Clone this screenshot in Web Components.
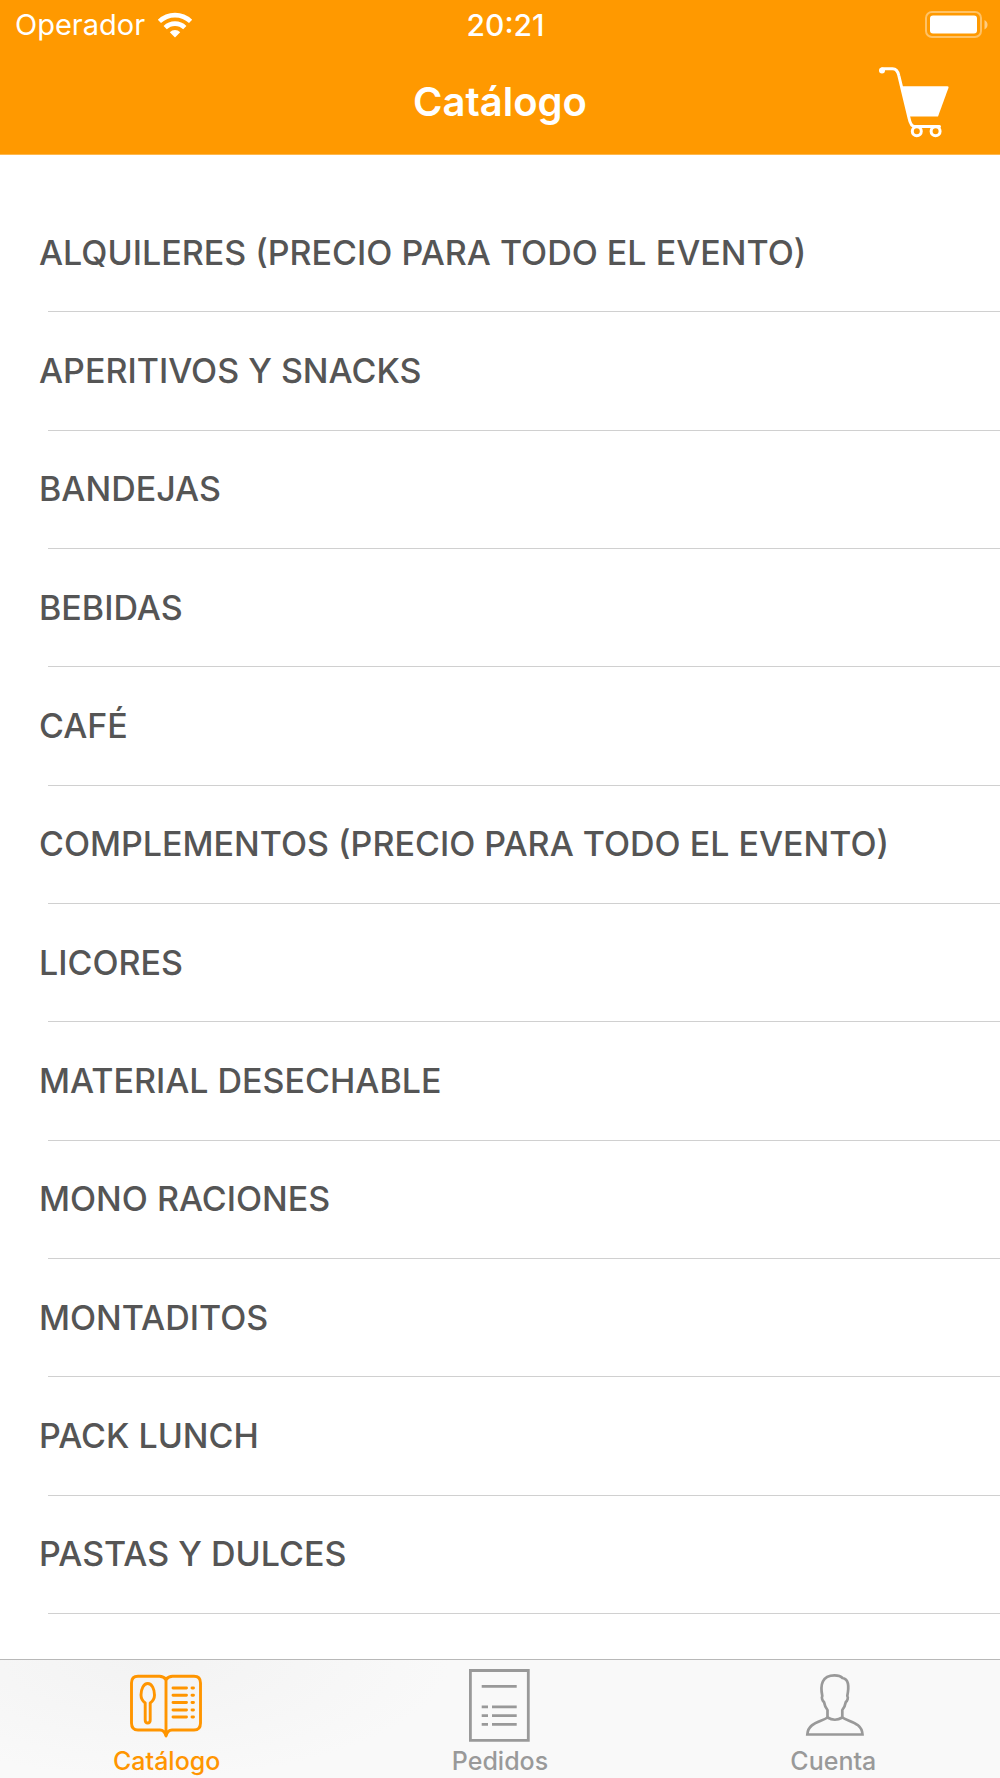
<!DOCTYPE html>
<html lang="es">
<head>
<meta charset="utf-8">
<meta name="viewport" content="width=device-width, initial-scale=1">
<title>Catálogo</title>
<style>
    body {
        margin: 0;
        background: #fff;
        font-family: Inter, "Liberation Sans", sans-serif;
    }
</style>
</head>
<body>
<catalog-app>
    <status-bar slot="top" carrier="Operador" time="20:21"></status-bar>
    <nav-bar slot="top">Catálogo</nav-bar>

    <category-row>ALQUILERES (PRECIO PARA TODO EL EVENTO)</category-row>
    <category-row>APERITIVOS Y SNACKS</category-row>
    <category-row>BANDEJAS</category-row>
    <category-row>BEBIDAS</category-row>
    <category-row>CAFÉ</category-row>
    <category-row>COMPLEMENTOS (PRECIO PARA TODO EL EVENTO)</category-row>
    <category-row>LICORES</category-row>
    <category-row>MATERIAL DESECHABLE</category-row>
    <category-row>MONO RACIONES</category-row>
    <category-row>MONTADITOS</category-row>
    <category-row>PACK LUNCH</category-row>
    <category-row>PASTAS Y DULCES</category-row>

    <tab-item slot="tabs" icon="menu" active>Catálogo</tab-item>
    <tab-item slot="tabs" icon="orders">Pedidos</tab-item>
    <tab-item slot="tabs" icon="account">Cuenta</tab-item>
</catalog-app>

<script>
class CatalogApp extends HTMLElement {
    connectedCallback() {
        this.attachShadow({ mode: 'open' });
        this.shadowRoot.innerHTML = `
            <style>
                :host {
                    display: flex;
                    flex-direction: column;
                    min-height: 100vh;
                }

                header {
                    background: #ff9900;
                    color: #fff;
                    border-bottom: 1px solid #ffb84d;
                }

                main {
                    flex: 1;
                    display: flex;
                    flex-direction: column;
                    padding: 39px 0 45px;
                }

                .list {
                    flex: 1;
                    display: flex;
                    flex-direction: column;
                }

                nav {
                    position: sticky;
                    bottom: 0;
                    display: grid;
                    grid-template-columns: repeat(3, 1fr);
                    border-top: 1px solid #b8b8b8;
                    background: radial-gradient(ellipse 30% 100% at 15% 0, #f3f3f3, #f9f9f9);
                }
            </style>
            <header><slot name="top"></slot></header>
            <main><div class="list" role="list"><slot></slot></div></main>
            <nav><slot name="tabs"></slot></nav>
        `;
    }
}

class StatusBar extends HTMLElement {
    connectedCallback() {
        this.attachShadow({ mode: 'open' });
        this.shadowRoot.innerHTML = `
            <style>
                :host {
                    display: grid;
                    grid-template-columns: 1fr auto 1fr;
                    align-items: center;
                    height: 50px;
                    padding: 0 12px 0 15px;
                    font-size: 29px;
                    line-height: 50px;
                }

                .carrier {
                    display: flex;
                    align-items: center;
                    gap: 12px;
                }

                .time {
                    padding-left: 8px;
                    font-size: 30px;
                    font-weight: 500;
                }

                .battery {
                    justify-self: end;
                }

                svg {
                    display: block;
                }
            </style>
            <span class="carrier">
                ${this.getAttribute('carrier')}
                <svg width="36" height="26" viewBox="0 0 36 26" fill="none" stroke="#fff" stroke-width="4.6" aria-label="Wi-Fi">
                    <path d="M2.4 9.4a22.5 22.5 0 0 1 31.2 0"/>
                    <path d="M8.2 15.6a14 14 0 0 1 19.6 0"/>
                    <path d="M18 25.5l-5.2-5.3a7.5 7.5 0 0 1 10.4 0z" fill="#fff" stroke="none"/>
                </svg>
            </span>
            <span class="time">${this.getAttribute('time')}</span>
            <svg class="battery" width="64" height="28" viewBox="0 0 64 28" aria-label="Batería">
                <rect x="2" y="1" width="55" height="25" rx="6" fill="none" stroke="#fff" stroke-opacity=".4" stroke-width="2"/>
                <rect x="6" y="4.5" width="47" height="18" rx="3" fill="#fff"/>
                <path d="M60.5 9c4 2 4 7.5 0 9.5z" fill="#fff" fill-opacity=".5"/>
            </svg>
        `;
    }
}

class NavBar extends HTMLElement {
    connectedCallback() {
        this.attachShadow({ mode: 'open' });
        this.shadowRoot.innerHTML = `
            <style>
                :host {
                    display: grid;
                    grid-template-columns: 1fr auto 1fr;
                    align-items: center;
                    height: 104px;
                }

                h1 {
                    grid-column: 2;
                    margin: 0;
                    font-size: 40px;
                    line-height: 104px;
                    font-weight: 600;
                }

                button {
                    justify-self: end;
                    margin-right: 48px;
                    padding: 0;
                    border: 0;
                    background: none;
                    color: inherit;
                    cursor: pointer;
                }

                svg {
                    display: block;
                }
            </style>
            <h1><slot></slot></h1>
            <button type="button" aria-label="Carrito">
                <svg width="76" height="76" viewBox="0 0 76 76" fill="none" stroke="currentColor" stroke-width="3">
                    <circle cx="6" cy="6.4" r="3" fill="currentColor" stroke="none"/>
                    <path d="M6 4.7H16.5C20 4.7 22 7.5 22.8 11.5L33 54C34 59 35.5 62.5 38.5 62.5H63.5" stroke-linecap="round"/>
                    <path d="M25.5 22.2H71.5q1.5 0 1 1.5L62 52.5H33z" fill="currentColor" stroke="none"/>
                    <circle cx="40.8" cy="67.3" r="4.5"/>
                    <circle cx="59.6" cy="67.3" r="4.5"/>
                </svg>
            </button>
        `;
    }
}

class CategoryRow extends HTMLElement {
    connectedCallback() {
        this.setAttribute('role', 'listitem');
        this.attachShadow({ mode: 'open' });
        this.shadowRoot.innerHTML = `
            <style>
                :host {
                    flex: 1;
                    display: flex;
                    flex-direction: column;
                    min-height: 88px;
                }

                a {
                    flex: 1;
                    display: flex;
                    align-items: center;
                    padding: 0 39px;
                    color: #555;
                    font-size: 34px;
                    line-height: 40px;
                    font-weight: 550;
                    text-decoration: none;
                }

                /* the separator starts a little inside the label */
                hr {
                    width: auto;
                    height: 1px;
                    margin: 0 0 0 48px;
                    border: 0;
                    background: #d0d0d0;
                }
            </style>
            <a href="#"><slot></slot></a>
            <hr>
        `;
    }
}

const tabIcons = {
    menu: `
        <g stroke-width="2.9" stroke-linecap="round" stroke-linejoin="round" transform="translate(-1 0)">
            <path d="M38 11.5C36 9 34 8.3 31.5 8.3H10Q3.5 8.3 3.5 15V55Q3.5 62 10 62H32Q36.5 62 38 68Q39.5 62 44 62H66Q72.5 62 72.5 55V15Q72.5 8.3 66 8.3H44.5C42 8.3 40 9 38 11.5z"/>
            <path d="M38 11.5V67"/>
            <path d="M19.7 15.5C15.5 15.5 13 21.5 13 27C13 31 14.8 33.2 17.2 35V52Q17.2 55 19.7 55Q22.2 55 22.2 52V35C24.8 33.2 26.5 31 26.5 27C26.5 21.5 24 15.5 19.7 15.5z"/>
            <path d="M45 20H58.5M45 27.3H58.5M45 34.5H58.5M45 42H58.5M45 49H58.5"/>
            <path d="M64 20H65.5M64 27.3H65.5M64 34.5H65.5M64 42H65.5M64 49H65.5"/>
        </g>`,
    orders: `
        <g stroke-width="2.8">
            <path d="M8.4 2.5H66.3V72.3H8.4z"/>
            <path d="M19.7 18.4H54.7"/>
            <path d="M19.7 38.8H26M30 38.8H54.7M19.7 47.6H26M30 47.6H54.7M19.7 56.3H26M30 56.3H54.7"/>
        </g>`,
    account: `
        <g stroke-width="2.7" stroke-linejoin="round">
            <path d="M32.5 49.5V42C30.5 39.5 29.5 37 29 34C27.3 33 26.3 29.5 27.3 28C25 17 27 7.3 39.5 7.3C43 7.3 46 8.3 47.5 10C53.7 11 54.2 18 52.3 28C53.5 29.5 52.5 33 50.8 34C50.3 37 49.3 39.500 47.3 42V49.500"/>
            <path d="M32.5 49.5Q39.9 54 47.3 49.5C54 54 67 54.5 67.5 66.5H12.3C13 54.5 26 54 32.5 49.5z" stroke-linejoin="miter"/>
        </g>`
};

class TabItem extends HTMLElement {
    connectedCallback() {
        const current = this.hasAttribute('active') ? 'aria-current="page"' : '';
        this.attachShadow({ mode: 'open' });
        this.shadowRoot.innerHTML = `
            <style>
                :host {
                    display: block;
                    color: #999;
                }

                :host([active]) {
                    color: #ff9500;
                }

                a {
                    display: flex;
                    flex-direction: column;
                    align-items: center;
                    padding: 8px 0 0;
                    color: inherit;
                    font-size: 25px;
                    line-height: 34px;
                    font-weight: 450;
                    text-decoration: none;
                }

                slot {
                    display: block;
                }
            </style>
            <a href="#" ${current}>
                <svg width="76" height="76" viewBox="0 0 76 76" fill="none" stroke="currentColor" aria-hidden="true">
                    ${tabIcons[this.getAttribute('icon')]}
                </svg>
                <slot></slot>
            </a>
        `;
    }
}

customElements.define('catalog-app', CatalogApp);
customElements.define('status-bar', StatusBar);
customElements.define('nav-bar', NavBar);
customElements.define('category-row', CategoryRow);
customElements.define('tab-item', TabItem);
</script>
</body>
</html>
